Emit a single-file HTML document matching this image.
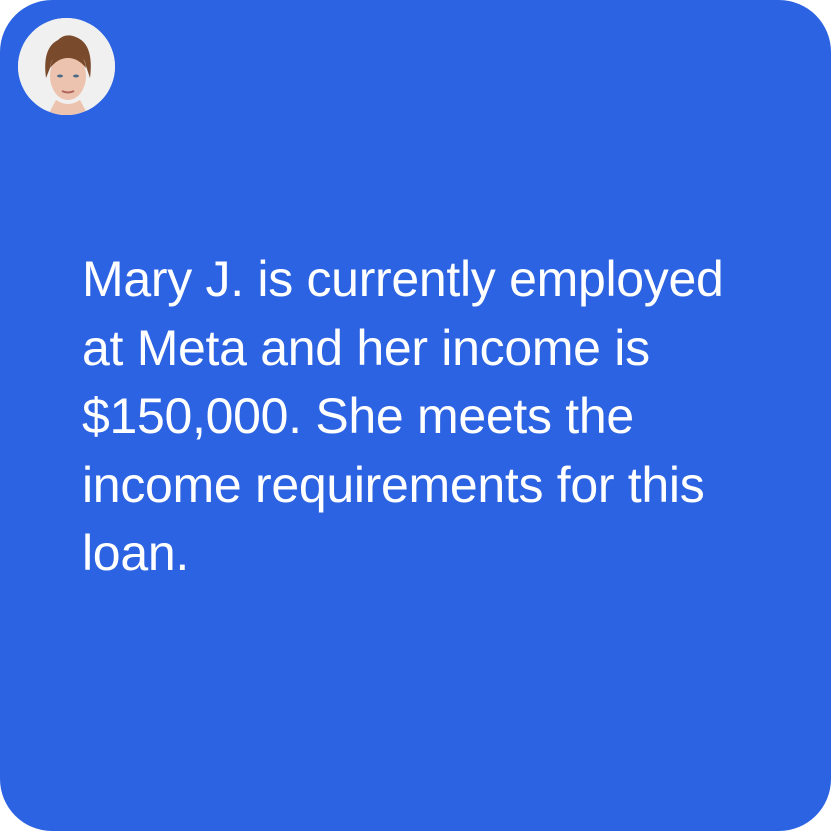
<!DOCTYPE html>
<html><head><style>
html,body{margin:0;padding:0;background:#fff;width:831px;height:831px;overflow:hidden}
.card{position:absolute;left:0;top:0;width:831px;height:831px;background:#2c63e2;border-radius:52px}
.av{position:absolute;left:18px;top:18px;width:97px;height:97px;border-radius:50%;background:#efefef;overflow:hidden}
.t{position:absolute;left:82px;top:245px;width:740px;color:#fff;font-family:"Liberation Sans",sans-serif;font-size:50px;line-height:68.5px;letter-spacing:-0.3px}
</style></head><body>
<div class="card">
<div class="av"><svg width="97" height="97" viewBox="0 0 97 97">
<rect width="97" height="97" fill="#f0f0f0"/>
<path d="M28 60 Q24 30 40 22 Q48 14 60 20 Q76 28 72 60 L68 48 Q66 34 50 34 Q34 34 32 50 Z" fill="#7a4a2c"/>
<ellipse cx="50" cy="58" rx="18" ry="24" fill="#ecc3ae"/>
<path d="M32 50 Q36 30 50 32 Q66 32 68 50 Q60 40 50 40 Q40 40 32 50Z" fill="#7a4a2c"/>
<path d="M38 82 Q50 90 62 82 L70 97 L30 97Z" fill="#ecc3ae"/>
<ellipse cx="42" cy="58" rx="3" ry="1.5" fill="#4a6a8a"/>
<ellipse cx="58" cy="58" rx="3" ry="1.5" fill="#4a6a8a"/>
<path d="M44 73 Q50 76 56 73" stroke="#b0665a" stroke-width="2" fill="none"/>
</svg></div>
<div class="t">Mary J. is currently employed<br>at Meta and her income is<br>$150,000. She meets the<br>income requirements for this<br>loan.</div>
</div>
</body></html>
